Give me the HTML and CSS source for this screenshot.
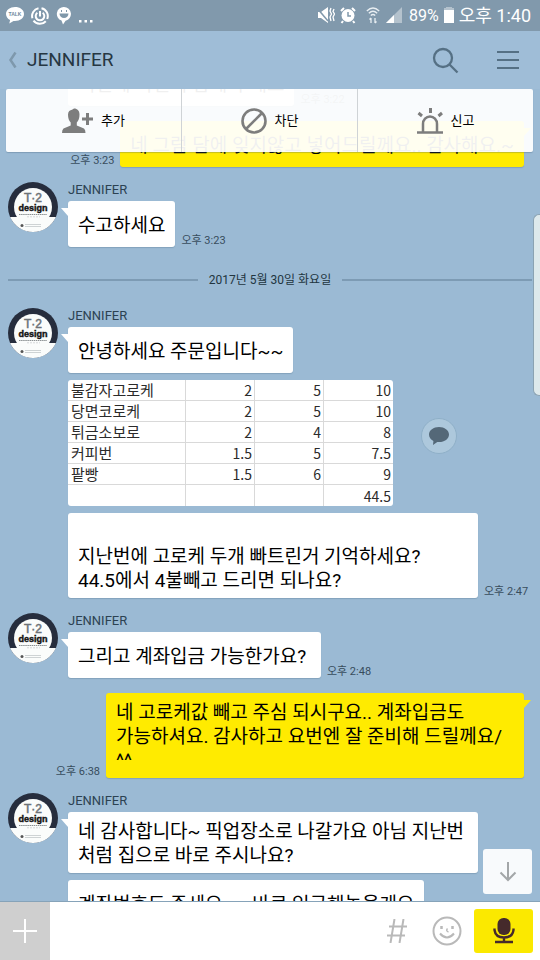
FILE: index.html
```html
<!DOCTYPE html>
<html lang="ko">
<head>
<meta charset="utf-8">
<meta name="viewport" content="width=device-width, initial-scale=1">
<title>JENNIFER</title>
<link rel="stylesheet" href="styles.css">
</head>
<body>
<svg class="defs" aria-hidden="true">
  <symbol id="avatar" viewBox="0 0 50 50">
    <circle cx="25" cy="25" r="25" fill="#262d3d"/>
    <path d="M2.1 35H47.9A25 25 0 0 1 2.1 35Z" fill="#fafcfb"/>
    <circle cx="25" cy="25" r="19" fill="#fafcfb"/>
    <text x="25" y="20" text-anchor="middle" font-family="Liberation Sans" font-size="12" fill="#6c7277" stroke="#6c7277" stroke-width=".5">T·2</text>
    <text x="25" y="29" text-anchor="middle" font-family="Liberation Sans Narrow, Liberation Sans" font-size="9" font-weight="bold" fill="#111" stroke="#111" stroke-width=".4">design</text>
    <path d="M11 32.5H39" stroke="#8b9092" stroke-width="1" stroke-dasharray="1.5 .6"/>
    <path d="M19 34.8H32" stroke="#c5c9ca" stroke-width=".7" stroke-dasharray="2 1"/>
    <circle cx="14" cy="43.500" r="1.500" fill="#555"/>
    <path d="M17 42.500H33M17 44.500H33" stroke="#c3c8ca" stroke-width=".8"/>
  </symbol>
</svg>

<div class="status">
  <div class="status-group">
    <svg width="18" height="17" viewBox="0 0 18 17" aria-hidden="true"><path d="M9 0C4 0 0 3 0 7c0 2.600 1.600 4.800 4.100 6L3.300 16.500 7.500 13.900C13.500 14.500 18 11.300 18 7S14 0 9 0Z" fill="#fff"/><text x="9" y="9" text-anchor="middle" font-family="Liberation Sans" font-size="5" font-weight="bold" fill="#70889b">TALK</text></svg>
    <svg width="18" height="18" viewBox="0 0 18 18" fill="none" stroke="#fff" stroke-width="2" aria-hidden="true"><path d="M10.500 1.200A8 8 0 0 1 16.200 12M14.800 14.200A8 8 0 0 1 2.500 13.600M1.400 11.300A8 8 0 0 1 7.500 1.200"/><path d="M6.300 5.700A4.300 4.300 0 1 0 11.700 5.700M9 4V9.500"/></svg>
    <svg width="16" height="18" viewBox="0 0 16 18" aria-hidden="true"><path d="M8 0A7 7 0 0 0 5.500 13.600L7 17.500 9.600 13.800A7 7 0 0 0 8 0Z" fill="#fff"/><path d="M3.500 6.500H12.500A4.500 4.500 0 0 1 3.500 6.500Z" fill="#7f98aa"/><path d="M5.500 3V5M10.500 3V5" stroke="#7f98aa"/></svg>
    <svg width="14" height="18" viewBox="0 0 14 18" fill="#fff" aria-hidden="true"><path d="M0 13h2.500v2.500H0zM5.500 13H8v2.500H5.500zM11 13h2.500v2.500H11z"/></svg>
  </div>
  <div class="status-group status-right">
    <svg width="18" height="17" viewBox="0 0 18 17" fill="#fff" aria-hidden="true"><path d="M1 5H4L11 0V16L4 11H1Z"/><path d="M0 1L11 14" stroke="#8199ac" stroke-width="1.500"/><path d="M14 1L13 4 14.500 7 13 10 14 14M17 2L16 4.500 17.500 7 16 10 17 14" fill="none" stroke="#fff" stroke-width="1.300"/></svg>
    <svg width="16" height="17" viewBox="0 0 16 17" aria-hidden="true"><circle cx="8" cy="8.500" r="6.500" fill="#fff"/><path d="M1 4L4 1M15 4L12 1M3 14L1.500 16M13 14L14.500 16" stroke="#fff" stroke-width="2"/><path d="M8 5V9H11" fill="none" stroke="#8199ac" stroke-width="1.500"/></svg>
    <svg class="wifi" width="14" height="17" viewBox="0 0 14 17" fill="none" stroke="#e8eef2" stroke-width="1.300" aria-hidden="true"><path d="M.8 4Q7-2 13.200 4M2.800 6.300Q7 2.300 11.200 6.300M4.800 8.500Q7 6.500 9.200 8.500"/><path d="M5 16V11M3.500 12.500L5 11M9 11V16M10.500 14.500L9 16"/></svg>
    <svg width="16" height="17" viewBox="0 0 16 17" aria-hidden="true"><path d="M0 16L16 0V16Z" fill="#b4c2cd"/><path d="M0 16L8 8V16Z" fill="#fff"/></svg>
    <span class="battery-text">89%</span>
    <svg width="10" height="17" viewBox="0 0 10 17" aria-hidden="true"><path d="M2 0H8V1H10V3H0V1H2Z" fill="#b4c2cd"/><path d="M0 3H10V16H0Z" fill="#fff"/></svg>
    <span class="clock">오후 1:40</span>
  </div>
</div>

<header class="header">
  <button class="icon-button back" aria-label="뒤로"><svg width="9" height="18" viewBox="0 0 9 18"><path d="M7.500 1.500L2.500 9L7.500 16.500" fill="none" stroke="#7e98ac" stroke-width="2.500"/></svg></button>
  <h1 class="title">JENNIFER</h1>
  <button class="icon-button" aria-label="검색"><svg width="27" height="27" viewBox="0 0 27 27" fill="none" stroke="#557084" stroke-width="2.300"><circle cx="11" cy="11" r="9"/><path d="M17.500 17.500L25.500 25.500"/></svg></button>
  <button class="icon-button" aria-label="메뉴"><svg width="22" height="20" viewBox="0 0 22 20" stroke="#557084" stroke-width="2"><path d="M0 2H22M0 10H22M0 18H22"/></svg></button>
</header>

<main class="chat">
  <div class="messages">
    <div class="theirs-row">
      <div class="stack"><div class="line"><p class="bubble">이번에 빠진거 담에 주세요</p><time>오후 3:22</time></div></div>
    </div>
    <div class="mine-row"><time>오후 3:23</time><p class="bubble mine tail">네 그럼 담에 잊지않고 넣어드릴께요.. 감사해요.~</p></div>

    <div class="theirs-row">
      <svg class="avatar" role="img" aria-label="JENNIFER"><use href="#avatar"/></svg>
      <div class="stack">
        <h2 class="name">JENNIFER</h2>
        <div class="line"><p class="bubble tail">수고하세요</p><time>오후 3:23</time></div>
      </div>
    </div>

    <div class="date"><span>2017년 5월 30일 화요일</span></div>

    <div class="theirs-row">
      <svg class="avatar" role="img" aria-label="JENNIFER"><use href="#avatar"/></svg>
      <div class="stack">
        <h2 class="name">JENNIFER</h2>
        <div class="line"><p class="bubble tail">안녕하세요 주문입니다~~</p></div>
        <div class="line photo">
          <table class="order">
            <tbody>
              <tr><th scope="row">불감자고로케</th><td>2</td><td>5</td><td>10</td></tr>
              <tr><th scope="row">당면코로케</th><td>2</td><td>5</td><td>10</td></tr>
              <tr><th scope="row">튀금소보로</th><td>2</td><td>4</td><td>8</td></tr>
              <tr><th scope="row">커피번</th><td>1.5</td><td>5</td><td>7.5</td></tr>
              <tr><th scope="row">팥빵</th><td>1.5</td><td>6</td><td>9</td></tr>
              <tr><td></td><td></td><td></td><td>44.5</td></tr>
            </tbody>
          </table>
          <button class="share" aria-label="공유"><svg width="20" height="18" viewBox="0 0 20 18" fill="#546878"><path d="M10 0C4.500 0 0 3.300 0 7.600c0 2.700 1.700 5 4.400 6.300L4 18l4.300-3C14.500 15.800 20 12.500 20 7.600 20 3.300 15.500 0 10 0Z"/></svg></button>
        </div>
        <div class="line"><p class="bubble wide"><br>지난번에 고로케 두개 빠트린거 기억하세요?<br>44.5에서 4불빼고 드리면 되나요?</p><time>오후 2:47</time></div>
      </div>
    </div>

    <div class="theirs-row">
      <svg class="avatar" role="img" aria-label="JENNIFER"><use href="#avatar"/></svg>
      <div class="stack">
        <h2 class="name">JENNIFER</h2>
        <div class="line"><p class="bubble tail">그리고 계좌입금 가능한가요?&nbsp;</p><time>오후 2:48</time></div>
      </div>
    </div>

    <div class="mine-row"><time>오후 6:38</time><p class="bubble mine tail">네 고로케값 빼고 주심 되시구요.. 계좌입금도 가능하셔요. 감사하고 요번엔 잘 준비해 드릴께요/ ^^</p></div>

    <div class="theirs-row">
      <svg class="avatar" role="img" aria-label="JENNIFER"><use href="#avatar"/></svg>
      <div class="stack">
        <h2 class="name">JENNIFER</h2>
        <div class="line"><p class="bubble tail">네 감사합니다~ 픽업장소로 나갈가요 아님 지난번처럼 집으로 바로 주시나요?</p></div>
        <div class="line"><p class="bubble">계좌번호도 주세요..... 바로 입금해놓을게요</p></div>
      </div>
    </div>
  </div>

  <div class="actions">
    <button><svg width="31" height="26" viewBox="0 0 31 26" fill="#7d7d7d"><path d="M12 0.500C15.500 0.500 17.500 3 17.500 6.500 17.500 10 16.500 13 14.800 14.500V17.500L22 20.500Q23.500 21.500 23.500 25H0Q0 21.500 1.500 20.500L8.700 17.500V14.500C7 13 6 10 6 6.500 6 3.500 8 2 10 1.800Z"/><path d="M24 5H27V9.500H31V12.500H27V17H24V12.500H20V9.500H24Z"/></svg>추가</button>
    <button><svg width="26" height="26" viewBox="0 0 26 26" fill="none" stroke="#7d7d7d" stroke-width="2.600"><circle cx="13" cy="13" r="11.500"/><path d="M5 21L21 5"/></svg>차단</button>
    <button><svg width="26" height="26" viewBox="0 0 26 26" fill="none" stroke="#7d7d7d"><path d="M0 24.500H26M6 24V16A7 7.500 0 0 1 20 16V24" stroke-width="2.500"/><path d="M13.500 0V5M1.500 5L5 8M25 5L21.500 8" stroke-width="3"/></svg>신고</button>
  </div>
  <div class="edge-handle"></div>
  <button class="to-bottom" aria-label="맨 아래로"><svg width="18" height="20" viewBox="0 0 18 20" fill="none" stroke="#a3a6a8" stroke-width="2"><path d="M9 0V18M1.500 10.500L9 18L16.500 10.500"/></svg></button>
</main>

<footer class="composer">
  <button class="attach" aria-label="첨부"><svg width="24" height="24" viewBox="0 0 24 24" stroke="#fff" stroke-width="2"><path d="M12 0V24M0 12H24"/></svg></button>
  <input class="message-input" type="text" aria-label="메시지 입력">
  <button class="icon-button" aria-label="샵검색"><svg width="20" height="24" viewBox="0 0 20 24" fill="none" stroke="#b9b9b9" stroke-width="2"><path d="M7.500 0L3.500 24M16.500 0L12.500 24M2 7.500H20M0 16.500H18"/></svg></button>
  <button class="icon-button" aria-label="이모티콘"><svg width="30" height="30" viewBox="0 0 30 30" fill="none" stroke="#b9b9b9" stroke-width="2"><circle cx="15" cy="15" r="13.500"/><path d="M8 17.500Q15 25.500 22 17.500"/><path d="M15.500 12.500Q13.500 15 16.500 16" stroke-width="1.500"/><path d="M9.500 10V13M20.500 10V13" stroke-width="2.500"/></svg></button>
  <button class="mic" aria-label="음성 메시지"><svg width="22" height="26" viewBox="0 0 22 26" fill="none" stroke="#452a2b" stroke-width="2.400"><rect x="4.500" y="0" width="13" height="17" rx="6" fill="#452a2b" stroke="none"/><path d="M1.500 10.500V12Q2.500 19.500 11 19.500T20.500 12V10.500M11 19V24M2 24H20"/></svg></button>
</footer>
</body>
</html>
```
FILE: styles.css
```css
* { box-sizing: border-box; }

body {
  margin: 0;
  height: 100vh;
  display: flex;
  flex-direction: column;
  overflow: hidden;
  background: #9bbad4;
  color: #000;
  font-family: Roboto, "Noto Sans CJK KR", sans-serif;
}

button {
  border: 0;
  padding: 0;
  background: none;
  font: inherit;
  color: inherit;
  display: flex;
  align-items: center;
  justify-content: center;
  cursor: pointer;
}

svg { display: block; flex: none; }
.defs { position: absolute; width: 0; height: 0; }
h1, h2, p { margin: 0; font-weight: 400; }

/* Status bar */
.status {
  height: 31px;
  flex: none;
  display: flex;
  align-items: center;
  justify-content: space-between;
  padding: 0 9px 0 6px;
  background: #8199ac;
  color: #fff;
}
.status-group { display: flex; align-items: center; gap: 7px; }
.status-right { gap: 5px; }
.wifi { margin: 0 1px 0 5px; }
.battery-text { margin-left: 2px; font-size: 16px; line-height: 24px; }
.clock { font-size: 18px; line-height: 24px; }

/* Header */
.header {
  height: 58px;
  flex: none;
  display: flex;
  align-items: center;
  gap: 38px;
  padding: 0 21px 0 8px;
  background: #9fbdd7;
}
.back { margin-right: -28px; }
.title {
  flex: 1;
  font-size: 19px;
  line-height: 24px;
  color: #263742;
}

/* Conversation */
.chat {
  position: relative;
  flex: 1;
  min-height: 0;
  overflow: hidden;
}
.messages {
  display: flex;
  flex-direction: column;
  gap: 15px;
  margin-top: -29px;
  padding: 0 16px 0 68px;
}
.theirs-row { position: relative; }
.avatar {
  position: absolute;
  left: -60px;
  top: 0;
  width: 50px;
  height: 50px;
}
.stack { display: flex; flex-direction: column; gap: 7px; }
.name {
  margin-bottom: -3px;
  font-size: 13px;
  line-height: 15px;
  color: #2c4252;
}
.line { display: flex; align-items: flex-end; gap: 6px; }
.mine-row {
  display: flex;
  justify-content: flex-end;
  align-items: flex-end;
  gap: 6px;
  margin-left: -68px;
}
time {
  flex: none;
  font-size: 11px;
  line-height: 12px;
  color: #384d5d;
}

.bubble {
  position: relative;
  display: flex;
  align-items: center;
  min-height: 46px;
  max-width: 410px;
  padding: 8px 10px 5px;
  border-radius: 3px;
  background: #fff;
  box-shadow: 0 1px 1px rgba(60, 90, 115, 0.25);
  font-size: 19px;
  line-height: 24px;
  word-break: break-all;
}
.bubble.wide { display: block; flex: none; width: 410px; }
.bubble.mine {
  max-width: 418px;
  background: #ffeb00;
  word-break: keep-all;
}
.tail::before {
  content: "";
  position: absolute;
  top: 7px;
  left: -7px;
  border-top: 8px solid #fff;
  border-left: 7px solid transparent;
}
.mine.tail::before {
  left: auto;
  right: -7px;
  border-top-color: #ffeb00;
  border-left: 0;
  border-right: 7px solid transparent;
}

.date {
  display: flex;
  align-items: center;
  gap: 11px;
  margin: 10px -8px 5px -60px;
  font-size: 12px;
  line-height: 16px;
  color: #22353f;
}
.date::before,
.date::after {
  content: "";
  flex: 1;
  height: 2px;
  background: #7d9bb4;
}

/* Order sheet */
.photo { align-items: flex-start; gap: 28px; }
.order {
  width: 325px;
  table-layout: fixed;
  border-collapse: separate;
  border-spacing: 0;
  border-radius: 3px;
  overflow: hidden;
  background: #fff;
  color: #2b2b2b;
  font-family: "Noto Sans CJK KR", sans-serif;
}
.order th,
.order td {
  height: 21px;
  padding: 0 2px;
  border-right: 1px solid #d9d9d9;
  border-bottom: 1px solid #d9d9d9;
  font-size: 14px;
  line-height: 20px;
  text-align: right;
}
.order th {
  padding-left: 3px;
  font-size: 15px;
  font-weight: 400;
  text-align: left;
}
.order tr > :first-child { width: 118px; }
.order tr > :last-child { border-right: 0; }
.order tr:last-child > * { border-bottom: 0; }

.share {
  width: 36px;
  height: 36px;
  margin-top: 38px;
  border: 1px solid #8fb0c8;
  border-radius: 50%;
  background: #adc8dc;
}

/* Layers over the conversation */
.actions {
  position: absolute;
  top: 0;
  left: 6px;
  right: 7px;
  height: 63px;
  display: flex;
  border-radius: 2px;
  background: rgba(255, 255, 255, 0.94);
  box-shadow: 0 1px 1px rgba(60, 90, 115, 0.3);
}
.actions button {
  flex: 1;
  gap: 8px;
  font-size: 13px;
  line-height: 20px;
}
.actions button + button { border-left: 1px solid #cfd3d6; }
.edge-handle {
  position: absolute;
  top: 125px;
  right: 0;
  width: 7px;
  height: 182px;
  border: 1px solid #8ba3b3;
  border-right: 0;
  border-radius: 6px 0 0 6px;
  background: #dde9ec;
}
.to-bottom {
  position: absolute;
  right: 8px;
  bottom: 7px;
  width: 49px;
  height: 45px;
  border-radius: 3px;
  background: #f8fafc;
}

/* Composer */
.composer {
  height: 59px;
  flex: none;
  display: flex;
  align-items: center;
  border-top: 1px solid #86a3b9;
  background: #fff;
  padding-right: 7px;
}
.attach {
  width: 50px;
  height: 100%;
  background: #cfcfcf;
}
.message-input {
  flex: 1;
  min-width: 0;
  height: 40px;
  border: 0;
  padding: 0 12px;
  outline: 0;
  font: inherit;
  font-size: 19px;
}
.composer .icon-button { margin-right: 25px; }
.composer .icon-button + .icon-button { margin-right: 12px; }
.mic {
  width: 59px;
  height: 44px;
  border-radius: 3px;
  background: #fbe900;
}
```
